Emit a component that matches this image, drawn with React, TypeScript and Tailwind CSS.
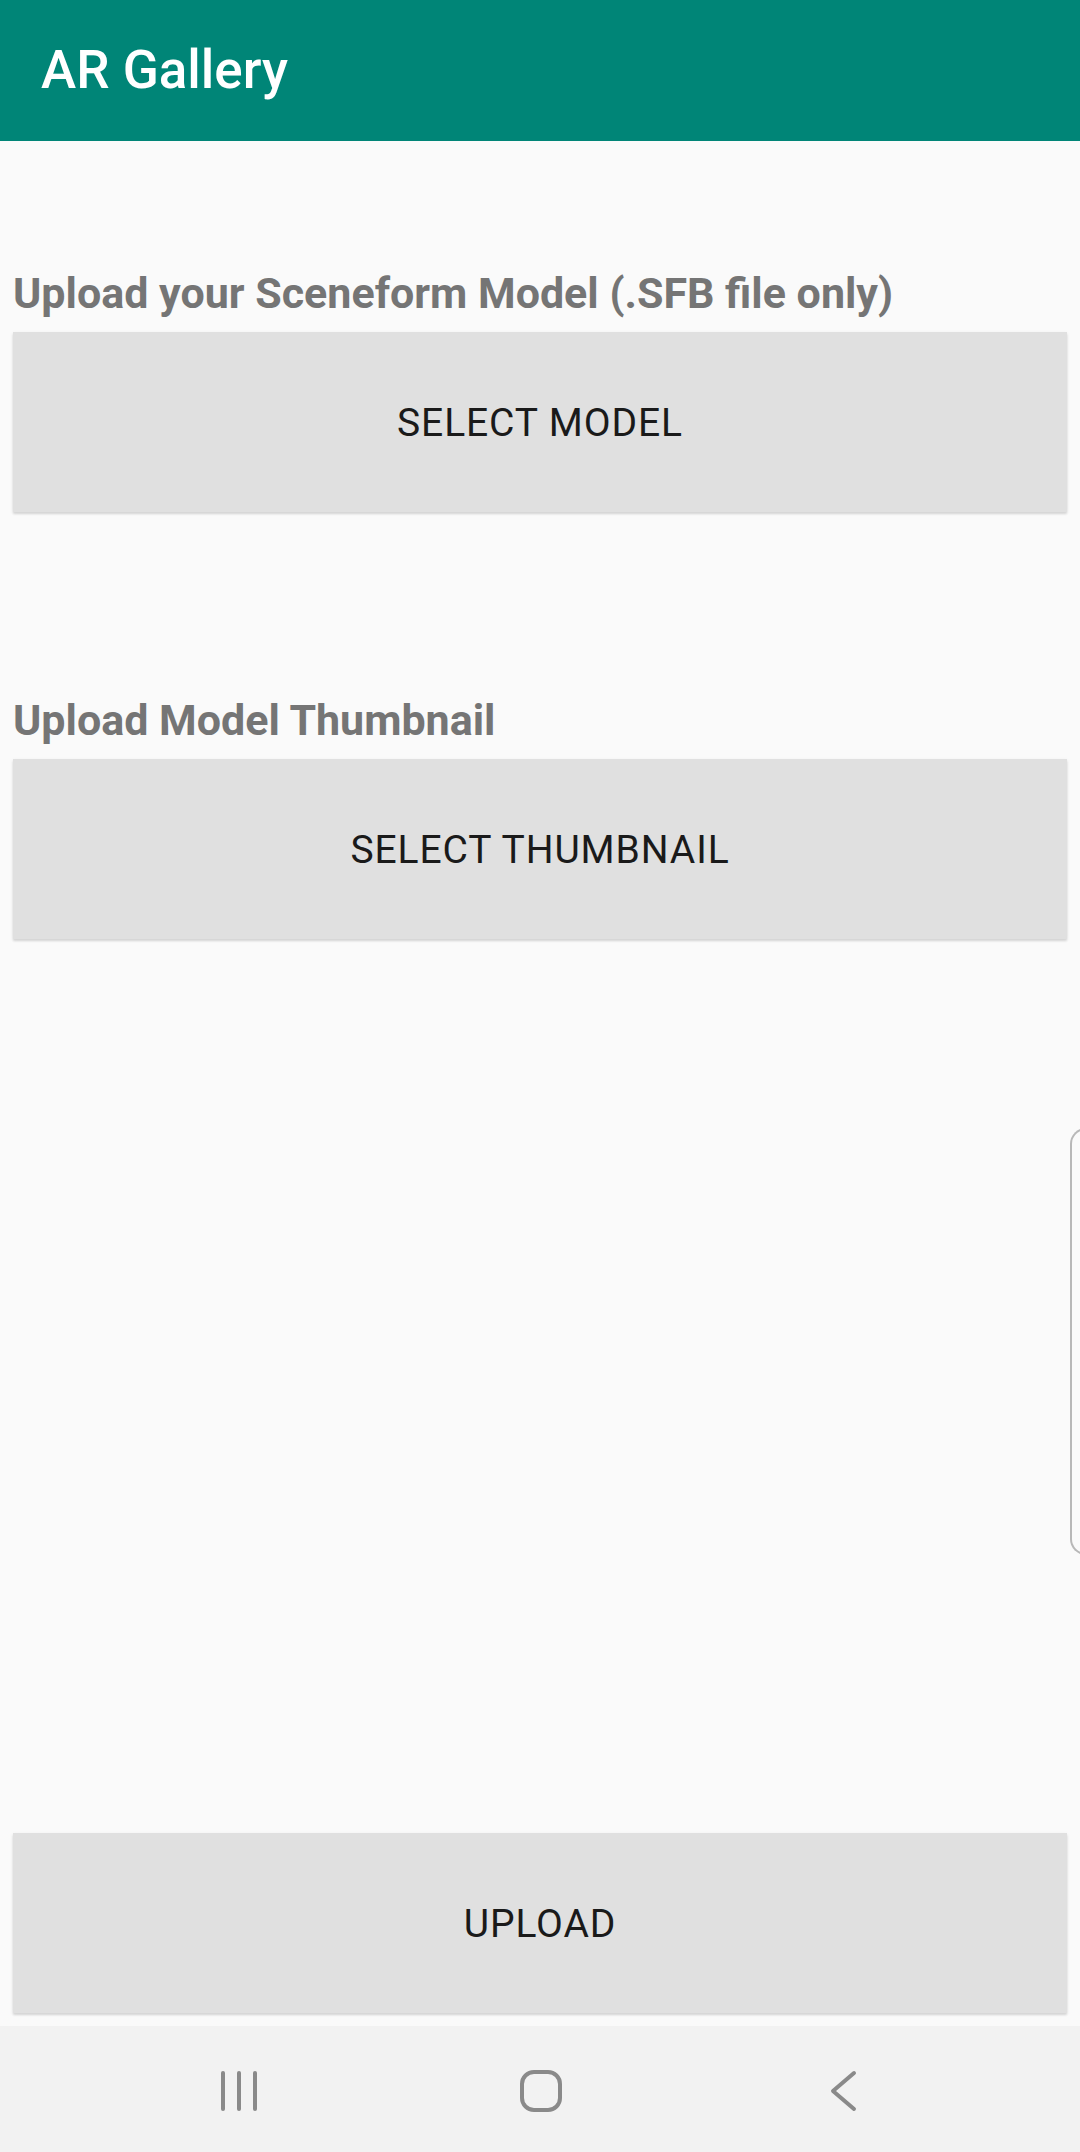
import React from "react";

function GrayButton({ label }: { label: string }) {
  return (
    <div className="mx-[13px] h-[180px] bg-[#e0e0e0] flex items-center justify-center shadow-[0_2px_2px_rgba(0,0,0,0.12),0_1px_4px_rgba(0,0,0,0.06)]">
      <span className="text-[39px] leading-[46px] text-[#1a1a1a] tracking-[0.9px] mt-[2px]">{label}</span>
    </div>
  );
}

export default function App() {
  return (
    <div
      className="relative w-[1080px] h-[2152px] bg-[#fafafa] flex flex-col overflow-hidden"
      style={{ fontFamily: "Roboto, 'Noto Sans', sans-serif" }}
    >
      <header className="h-[141px] bg-[#008577] flex items-center pl-[41px] shrink-0">
        <h1 className="text-[53px] leading-[62px] font-medium text-white mt-[-2px]">AR Gallery</h1>
      </header>

      <div className="mt-[128px] px-[13px]">
        <p className="text-[43px] leading-[49px] font-bold text-[#757575]">
          Upload your Sceneform Model (.SFB file only)
        </p>
      </div>
      <div className="mt-[14px]">
        <GrayButton label="SELECT MODEL" />
      </div>

      <div className="mt-[184px] px-[13px]">
        <p className="text-[43px] leading-[49px] font-bold text-[#757575]">
          Upload Model Thumbnail
        </p>
      </div>
      <div className="mt-[14px]">
        <GrayButton label="SELECT THUMBNAIL" />
      </div>

      <div className="flex-1" />

      <div className="mb-[13px]">
        <GrayButton label="UPLOAD" />
      </div>

      <nav className="h-[126px] shrink-0 bg-[#f2f2f2] relative">
        <svg
          className="absolute left-[218px] top-[44px]"
          width="42"
          height="42"
          viewBox="0 0 42 42"
          fill="none"
          stroke="#8a8a8a"
          strokeWidth="4"
          strokeLinecap="round"
        >
          <line x1="5" y1="3" x2="5" y2="39" />
          <line x1="21" y1="3" x2="21" y2="39" />
          <line x1="37" y1="3" x2="37" y2="39" />
        </svg>
        <svg
          className="absolute left-[518px] top-[42px]"
          width="46"
          height="46"
          viewBox="0 0 46 46"
          fill="none"
          stroke="#8a8a8a"
          strokeWidth="4"
        >
          <rect x="4" y="4" width="38" height="38" rx="12" ry="12" />
        </svg>
        <svg
          className="absolute left-[828px] top-[44px]"
          width="32"
          height="42"
          viewBox="0 0 32 42"
          fill="none"
          stroke="#8a8a8a"
          strokeWidth="4"
          strokeLinecap="round"
          strokeLinejoin="round"
        >
          <polyline points="26,3 5,21 26,39" />
        </svg>
      </nav>

      <div className="absolute left-[1070px] top-[1128px] w-[24px] h-[427px] border-[2px] border-r-0 border-[#b8b8b8] rounded-l-[16px]" />
    </div>
  );
}
